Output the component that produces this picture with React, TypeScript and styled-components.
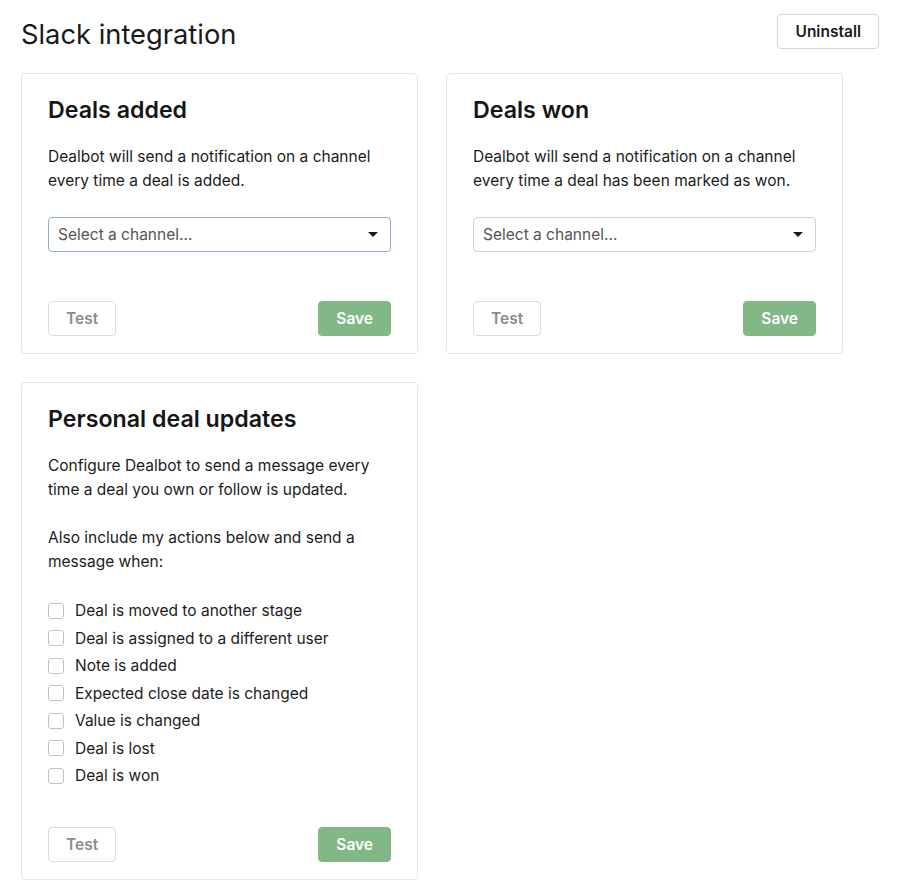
import React from "react";
import styled, { createGlobalStyle } from "styled-components";

const GlobalStyle = createGlobalStyle`
  html, body {
    margin: 0;
    padding: 0;
    background: #ffffff;
  }
  body {
    font-family: Inter, "Noto Sans", "Liberation Sans", sans-serif;
    color: #1b1b1b;
    -webkit-font-smoothing: antialiased;
  }
  * { box-sizing: border-box; }
`;

const Page = styled.div`
  padding: 14px 21px 0 21px;
  width: 900px;
`;

const Header = styled.header`
  display: flex;
  justify-content: space-between;
  align-items: flex-start;
  margin-bottom: 22px;
`;

const Title = styled.h1`
  margin: 4px 0 0 0;
  font-size: 27.3px;
  line-height: 33px;
  font-weight: 400;
  color: #1a1a1a;
`;

const Grid = styled.div`
  display: grid;
  grid-template-columns: 397px 397px;
  column-gap: 28px;
  row-gap: 28px;
  align-items: start;
`;

const Card = styled.section`
  border: 1px solid #e6e6e6;
  border-radius: 4px;
  background: #fff;
  padding: 21px 26px 17px 26px;
  display: flex;
  flex-direction: column;
`;

const CardTitle = styled.h2`
  margin: 0;
  font-size: 23.2px;
  line-height: 31px;
  font-weight: 600;
  color: #161616;
`;

const Text = styled.p<{ $mt?: number }>`
  margin: ${(p) => p.$mt ?? 19}px 0 0 0;
  font-size: 15.5px;
  line-height: 23.5px;
  color: #1b1b1b;
`;

const SelectBox = styled.div<{ $focused?: boolean }>`
  margin-top: 25px;
  height: 35px;
  border: 1px solid ${(p) => (p.$focused ? "#8eabd3" : "#cfcfcf")};
  border-radius: 4px;
  display: flex;
  align-items: center;
  justify-content: space-between;
  padding: 0 12px 0 9px;
  font-size: 15.5px;
  color: #555;
  background: #fff;
`;

const Caret = styled.span`
  width: 0;
  height: 0;
  border-left: 5px solid transparent;
  border-right: 5px solid transparent;
  border-top: 5px solid #1a1a1a;
`;

const ButtonRow = styled.div<{ $mt: number }>`
  margin-top: ${(p) => p.$mt}px;
  display: flex;
  justify-content: space-between;
`;

const Button = styled.button<{ $variant?: "primary" | "ghost" | "default" }>`
  height: 35px;
  padding: 0 17px;
  border-radius: 4px;
  font-family: inherit;
  font-size: 15.5px;
  font-weight: 600;
  cursor: default;
  border: 1px solid
    ${(p) =>
      p.$variant === "primary"
        ? "#82b886"
        : p.$variant === "ghost"
        ? "#dcdcdc"
        : "#d6d6d6"};
  background: ${(p) => (p.$variant === "primary" ? "#82b886" : "#fff")};
  color: ${(p) =>
    p.$variant === "primary"
      ? "#ffffff"
      : p.$variant === "ghost"
      ? "#8c8c8c"
      : "#1a1a1a"};
`;

const CheckList = styled.ul`
  list-style: none;
  margin: 24px 0 0 0;
  padding: 0;
  display: flex;
  flex-direction: column;
`;

const CheckRow = styled.li`
  height: 27.5px;
  display: flex;
  align-items: center;
  gap: 11px;
  font-size: 15.5px;
  color: #1b1b1b;
`;

const CheckBox = styled.span`
  width: 16px;
  height: 16px;
  border: 1px solid #c2c2c2;
  border-radius: 3px;
  background: #fff;
  flex: none;
`;

function ChannelCard({
  title,
  text,
  focused,
}: {
  title: string;
  text: string;
  focused?: boolean;
}) {
  return (
    <Card>
      <CardTitle>{title}</CardTitle>
      <Text>{text}</Text>
      <SelectBox $focused={focused}>
        <span>Select a channel...</span>
        <Caret />
      </SelectBox>
      <ButtonRow $mt={49}>
        <Button $variant="ghost">Test</Button>
        <Button $variant="primary">Save</Button>
      </ButtonRow>
    </Card>
  );
}

const actions = [
  "Deal is moved to another stage",
  "Deal is assigned to a different user",
  "Note is added",
  "Expected close date is changed",
  "Value is changed",
  "Deal is lost",
  "Deal is won",
];

export default function App() {
  return (
    <>
      <GlobalStyle />
      <Page>
        <Header>
          <Title>Slack integration</Title>
          <Button $variant="default">Uninstall</Button>
        </Header>
        <Grid>
          <ChannelCard
            title="Deals added"
            text="Dealbot will send a notification on a channel every time a deal is added."
            focused
          />
          <ChannelCard
            title="Deals won"
            text="Dealbot will send a notification on a channel every time a deal has been marked as won."
          />
          <Card>
            <CardTitle>Personal deal updates</CardTitle>
            <Text>
              Configure Dealbot to send a message every time a deal you own or
              follow is updated.
            </Text>
            <Text $mt={25}>
              Also include my actions below and send a message when:
            </Text>
            <CheckList>
              {actions.map((a) => (
                <CheckRow key={a}>
                  <CheckBox />
                  {a}
                </CheckRow>
              ))}
            </CheckList>
            <ButtonRow $mt={37.5}>
              <Button $variant="ghost">Test</Button>
              <Button $variant="primary">Save</Button>
            </ButtonRow>
          </Card>
        </Grid>
      </Page>
    </>
  );
}
